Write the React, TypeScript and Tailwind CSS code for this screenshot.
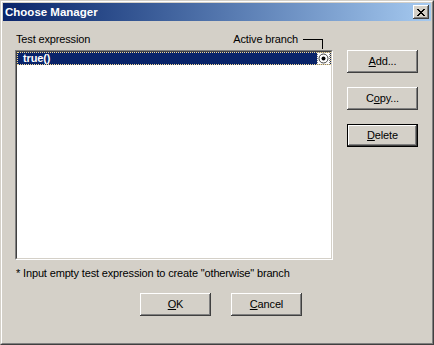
import React from "react";

const raised =
  "shadow-[inset_-1px_-1px_#404040,inset_1px_1px_#ffffff,inset_-2px_-2px_#808080,inset_2px_2px_#d4d0c8]";

function Btn({ children, def = false }: { children: React.ReactNode; def?: boolean }) {
  if (def) {
    return (
      <div className="w-[71px] h-[23px] border border-black bg-[#d4d0c8]">
        <div
          className={`w-full h-full flex items-center justify-center bg-[#d4d0c8] ${raised}`}
        >
          <span className="leading-[13px]">{children}</span>
        </div>
      </div>
    );
  }
  return (
    <div className={`w-[71px] h-[23px] flex items-center justify-center bg-[#d4d0c8] ${raised}`}>
      <span className="leading-[13px]">{children}</span>
    </div>
  );
}

export default function App() {
  return (
    <div
      className="w-[434px] h-[345px] bg-[#d4d0c8] text-black text-[11px] leading-[13px] tracking-[-0.15px] border border-t-[#d4d0c8] border-l-[#d4d0c8] border-b-[#404040] border-r-[#404040]"
      style={{ fontFamily: '"Liberation Sans", Arial, sans-serif' }}
    >
      <div className="w-full h-full border border-t-white border-l-white border-b-[#808080] border-r-[#808080] p-[1px] flex flex-col">
        {/* Title bar */}
        <div className="h-[18px] flex items-center bg-gradient-to-r from-[#0a246a] to-[#a6caf0] pl-[2px] pr-[2px]">
          <span className="text-white font-bold text-[11.5px] tracking-normal flex-1">Choose Manager</span>
          <div className={`w-[16px] h-[14px] bg-[#d4d0c8] flex items-center justify-center ${raised}`}>
            <svg width="8" height="7" viewBox="0 0 8 7" shapeRendering="crispEdges">
              <path
                d="M0 0h2v1h-2zM6 0h2v1h-2zM1 1h2v1h-2zM5 1h2v1h-2zM2 2h4v1h-4zM3 3h2v1h-2zM2 4h4v1h-4zM1 5h2v1h-2zM5 5h2v1h-2zM0 6h2v1h-2zM6 6h2v1h-2z"
                fill="#000"
              />
            </svg>
          </div>
        </div>

        {/* Body */}
        <div className="flex pl-[12px]">
          <div className="w-[318px] flex flex-col">
            <div className="mt-[12px] h-[17px] flex items-start">
              <span className="pl-[1px] flex-1">Test expression</span>
              <span>Active branch</span>
              <div className="w-[20px] h-[10px] mt-[6px] ml-[5px] mr-[10px] border-t border-r border-black" />
            </div>
            <div className="h-[210px] border border-t-[#808080] border-l-[#808080] border-b-white border-r-white">
              <div className="w-full h-full bg-white border border-t-[#404040] border-l-[#404040] border-b-[#d4d0c8] border-r-[#d4d0c8]">
                <div className="h-[13px] flex items-center bg-[#0a246a] outline outline-1 outline-dotted outline-[#f5db95] -outline-offset-1">
                  <span className="pl-[6px] flex-1 text-white font-bold">true()</span>
                  <div className="w-[13px] h-[13px] bg-white flex items-center justify-center mr-[1px] border border-dotted border-[#808080]">
                    <svg width="11" height="11" viewBox="0 0 11 11">
                      <circle cx="5.5" cy="5.5" r="4.5" fill="#ffffff" stroke="#404040" strokeWidth="1" />
                      <circle cx="5.5" cy="5.5" r="2" fill="#000000" />
                    </svg>
                  </div>
                </div>
              </div>
            </div>
            <div className="mt-[7px] pl-[1px] h-[13px]">
              * Input empty test expression to create "otherwise" branch
            </div>
          </div>

          <div className="ml-[14px] pt-[29px] flex flex-col gap-[14px]">
            <Btn>
              <span className="underline">A</span>dd...
            </Btn>
            <Btn>
              C<span className="underline">o</span>py...
            </Btn>
            <Btn def>
              <span className="underline">D</span>elete
            </Btn>
          </div>
        </div>

        <div className="mt-[13px] flex pl-[137px] gap-[20px]">
          <Btn>
            <span className="underline">O</span>K
          </Btn>
          <Btn>
            <span className="underline">C</span>ancel
          </Btn>
        </div>
      </div>
    </div>
  );
}
